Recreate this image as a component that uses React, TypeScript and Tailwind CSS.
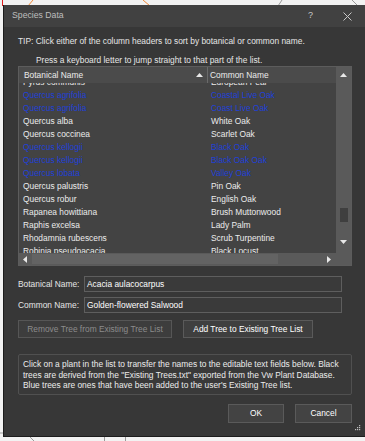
import React from "react";

const rows: { b: string; c: string; blue: boolean }[] = [
  { b: "Pyrus communis", c: "European Pear", blue: false },
  { b: "Quercus agrifolia", c: "Coastal Live Oak", blue: true },
  { b: "Quercus agrifolia", c: "Coast Live Oak", blue: true },
  { b: "Quercus alba", c: "White Oak", blue: false },
  { b: "Quercus coccinea", c: "Scarlet Oak", blue: false },
  { b: "Quercus kellogii", c: "Black Oak", blue: true },
  { b: "Quercus kellogii", c: "Black Oak Oak", blue: true },
  { b: "Quercus lobata", c: "Valley Oak", blue: true },
  { b: "Quercus palustris", c: "Pin Oak", blue: false },
  { b: "Quercus robur", c: "English Oak", blue: false },
  { b: "Rapanea howittiana", c: "Brush Muttonwood", blue: false },
  { b: "Raphis excelsa", c: "Lady Palm", blue: false },
  { b: "Rhodamnia rubescens", c: "Scrub Turpentine", blue: false },
  { b: "Robinia pseudoacacia", c: "Black Locust", blue: false },
];

const font = { fontFamily: '"Liberation Sans", Arial, sans-serif' };

function Tri({ dir, color = "#e8e8e8" }: { dir: "up" | "down" | "left" | "right"; color?: string }) {
  const pts =
    dir === "up"
      ? "0,5 3.5,1 7,5"
      : dir === "down"
      ? "0,1 3.5,5 7,1"
      : dir === "left"
      ? "5,0 1,3.5 5,7"
      : "1,0 5,3.5 1,7";
  return (
    <svg width="7" height="7" viewBox="0 0 7 7" className="block">
      <polygon points={pts} fill={color} />
    </svg>
  );
}

export default function App() {
  return (
    <div className="relative w-[365px] h-[441px] bg-[#f2f2f2] overflow-hidden" style={font}>
      <svg className="absolute inset-0" width="365" height="441" viewBox="0 0 365 441">
        <line x1="2.5" y1="0" x2="2.5" y2="6" stroke="#e02020" strokeWidth="1" />
        <line x1="33" y1="0" x2="28" y2="6" stroke="#f08a3a" strokeWidth="1" />
        <line x1="143" y1="0" x2="150" y2="6" stroke="#f08a3a" strokeWidth="1" />
        <line x1="282" y1="0" x2="278" y2="6" stroke="#9a9a9a" strokeWidth="1" />
        <line x1="352" y1="0" x2="358" y2="6" stroke="#9a9a9a" strokeWidth="1" />
        <line x1="0" y1="433" x2="3" y2="433" stroke="#9a9a9a" strokeWidth="1" />
        <line x1="30" y1="437" x2="34" y2="441" stroke="#9a9a9a" strokeWidth="1" />
        <line x1="104.5" y1="437" x2="104.5" y2="441" stroke="#9a9a9a" strokeWidth="1" />
        <line x1="125.5" y1="437" x2="125.5" y2="441" stroke="#9a9a9a" strokeWidth="1" />
      </svg>

      <div className="relative ml-[3px] mt-[5px] w-[362px] h-[432px] border-l border-b border-[#1c1c1c] bg-[#373737] flex flex-col">
        {/* Title bar */}
        <div className="h-[22px] bg-[#414141] flex items-center pl-[8px] pr-[13px] text-[8.7px] text-[#bebebe]">
          <span>Species Data</span>
          <span className="ml-auto mr-[30px] text-[9px] text-[#c8c8c8]">?</span>
          <svg width="9" height="9" viewBox="0 0 9 9">
            <path d="M0.5 0.5 L8.5 8.5 M8.5 0.5 L0.5 8.5" stroke="#c8c8c8" strokeWidth="1" />
          </svg>
        </div>

        {/* Body */}
        <div className="flex flex-col pl-[14px] text-[8.4px] text-[#e6e6e6]">
          <div className="mt-[8px] h-[12px] leading-[12px] whitespace-nowrap">
            TIP: Click either of the column headers to sort by botanical or common name.
          </div>
          <div className="mt-[7px] h-[12px] leading-[12px] pl-[18px] whitespace-nowrap">
            Press a keyboard letter to jump straight to that part of the list.
          </div>

          {/* List */}
          <div className="w-[334px] h-[200px] border border-[#5c5c5c] flex bg-[#434343]">
            <div className="w-[318px] flex flex-col">
              <div className="h-[16px] bg-[#4b4b4b] flex items-center">
                <div className="w-[189px] flex items-center pl-[5px] pr-[4px] border-r border-[#6a6a6a] h-full">
                  <span className="text-[#ececec]">Botanical Name</span>
                  <span className="ml-auto">
                    <Tri dir="up" />
                  </span>
                </div>
                <div className="pl-[2px] text-[#ececec]">Common Name</div>
              </div>
              <div className="h-[170px] overflow-hidden">
                <div className="-mt-[7.5px]">
                  {rows.map((r, i) => (
                    <div
                      key={i}
                      className={`h-[13px] leading-[13px] flex whitespace-nowrap ${
                        r.blue ? "text-[#2040d8]" : "text-[#ececec]"
                      }`}
                    >
                      <div className="w-[189px] pl-[4px]">{r.b}</div>
                      <div className="pl-[3px]">{r.c}</div>
                    </div>
                  ))}
                </div>
              </div>
              <div className="h-[12px] bg-[#5a5a5a] flex items-center">
                <div className="w-[13px] flex justify-center">
                  <Tri dir="left" />
                </div>
                <div className="w-[246px] h-[10px] bg-[#636363]" />
                <div className="ml-auto mr-[3px]">
                  <Tri dir="right" />
                </div>
              </div>
            </div>
            <div className="w-[15px] flex flex-col">
              <div className="h-[186px] bg-[#5a5a5a] flex flex-col items-center">
                <div className="mt-[5px]">
                  <Tri dir="up" />
                </div>
                <div className="mt-[129px] w-[8px] h-[14px] bg-[#3f3f3f]" />
                <div className="mt-[17px]">
                  <Tri dir="down" />
                </div>
              </div>
              <div className="h-[12px] bg-[#5a5a5a]" />
            </div>
          </div>

          {/* Inputs */}
          <div className="mt-[10px] flex items-center h-[16px]">
            <div className="w-[66px] text-[#e6e6e6] whitespace-nowrap">Botanical Name:</div>
            <div className="w-[258px] h-[16px] border border-[#5e5e5e] bg-[#3a3a3a] pl-[2px] leading-[14px] text-white whitespace-nowrap">
              Acacia aulacocarpus
            </div>
          </div>
          <div className="mt-[5px] flex items-center h-[16px]">
            <div className="w-[66px] text-[#e6e6e6] whitespace-nowrap">Common Name:</div>
            <div className="w-[258px] h-[16px] border border-[#5e5e5e] bg-[#3a3a3a] pl-[2px] leading-[14px] text-white whitespace-nowrap">
              Golden-flowered Salwood
            </div>
          </div>

          {/* Buttons */}
          <div className="mt-[7px] flex gap-[11px]">
            <div className="w-[154px] h-[18px] border border-[#565656] bg-[#3d3d3d] flex items-center justify-center text-[#8c8c8c] whitespace-nowrap">
              Remove Tree from Existing Tree List
            </div>
            <div className="w-[130px] h-[18px] border border-[#5a5a5a] bg-[#3f3f3f] flex items-center justify-center text-white whitespace-nowrap">
              Add Tree to Existing Tree List
            </div>
          </div>

          {/* Info box */}
          <div className="mt-[16px] w-[334px] h-[41px] border border-[#505050] bg-[#393939] rounded-[2px] pl-[4px] pt-[4px] text-[#ececec] leading-[10.5px] whitespace-nowrap">
            <div>Click on a plant in the list to transfer the names to the editable text fields below. Black</div>
            <div>trees are derived from the "Existing Trees.txt" exported from the Vw Plant Database.</div>
            <div>Blue trees are ones that have been added to the user's Existing Tree list.</div>
          </div>

          {/* OK / Cancel */}
          <div className="mt-[9px] flex gap-[11px] pl-[210px]">
            <div className="w-[56px] h-[19px] border border-[#5a5a5a] bg-[#434343] flex items-center justify-center text-white">
              OK
            </div>
            <div className="w-[57px] h-[19px] border border-[#5a5a5a] bg-[#434343] flex items-center justify-center text-white">
              Cancel
            </div>
          </div>
        </div>

        {/* resize grip */}
        <svg className="absolute right-[4px] bottom-[5px]" width="6" height="6" viewBox="0 0 6 6">
          <rect x="4" y="0" width="1.2" height="1.2" fill="#bdbdbd" />
          <rect x="2" y="2" width="1.2" height="1.2" fill="#bdbdbd" />
          <rect x="4" y="2" width="1.2" height="1.2" fill="#bdbdbd" />
          <rect x="0" y="4" width="1.2" height="1.2" fill="#bdbdbd" />
          <rect x="2" y="4" width="1.2" height="1.2" fill="#bdbdbd" />
          <rect x="4" y="4" width="1.2" height="1.2" fill="#bdbdbd" />
        </svg>
      </div>
    </div>
  );
}
